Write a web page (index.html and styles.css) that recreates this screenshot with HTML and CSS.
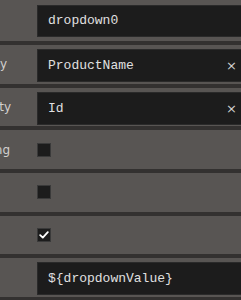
FILE: index.html
```html
<!DOCTYPE html>
<html>
<head>
<meta charset="utf-8">
<link rel="stylesheet" href="styles.css">
</head>
<body>
<div class="panel">
  <div class="row">
    <div class="label"></div>
    <div class="field field-first"><span class="value">dropdown0</span></div>
  </div>
  <div class="row">
    <div class="label label-a"><span>DisplayProperty</span></div>
    <div class="field"><span class="value">ProductName</span><span class="clear">×</span></div>
  </div>
  <div class="row">
    <div class="label label-b"><span>ValueProperty</span></div>
    <div class="field"><span class="value">Id</span><span class="clear">×</span></div>
  </div>
  <div class="row">
    <div class="label label-c"><span>AllowFiltering</span></div>
    <div class="check"></div>
  </div>
  <div class="row">
    <div class="label"></div>
    <div class="check"></div>
  </div>
  <div class="row">
    <div class="label"></div>
    <div class="check checked">
      <svg width="10" height="8" viewBox="0 0 10 8"><path d="M1.2 4.2 L3.8 6.6 L8.8 1.2" fill="none" stroke="#ffffff" stroke-width="1.8" stroke-linecap="round" stroke-linejoin="round"/></svg>
    </div>
  </div>
  <div class="row">
    <div class="label"></div>
    <div class="field"><span class="value">${dropdownValue}</span></div>
  </div>
</div>
</body>
</html>
```

FILE: styles.css
```css
html, body {
  margin: 0;
  padding: 0;
  background: #585553;
  overflow: hidden;
}
.panel {
  display: flex;
  flex-direction: column;
  width: 241px;
  overflow: hidden;
  margin-top: 2.3px;
}
.row {
  display: flex;
  align-items: center;
  height: 38.7px;
  border-bottom: 4px solid #333130;
  flex-shrink: 0;
}
.label {
  width: 37px;
  flex-shrink: 0;
  display: flex;
  justify-content: flex-end;
  overflow: hidden;
  white-space: nowrap;
  font-family: "DejaVu Sans", Verdana, sans-serif;
  font-size: 12px;
  color: #d2d0ce;
}
.label-a { padding-right: 30px; box-sizing: border-box; }
.label-b { padding-right: 26px; box-sizing: border-box; }
.label-c { padding-right: 27px; box-sizing: border-box; }
.field {
  flex: 1;
  align-self: flex-start;
  margin-right: -20px;
  height: 33px;
  margin-top: 4px;
  box-sizing: border-box;
  background: #1c1c1c;
  border: 1px solid #2a2a2a;
  display: flex;
  align-items: center;
  padding: 0 26px 0 10px;
  font-family: "Liberation Mono", "Courier New", monospace;
  font-size: 13px;
  color: #e0e0e0;
}
.field-first {
  margin-top: 2.7px;
  height: 32px;
}
.value {
  flex: 1;
  white-space: nowrap;
}
.clear {
  font-family: "DejaVu Sans", Verdana, sans-serif;
  font-size: 13px;
  color: #d0d0d0;
  margin-right: -3px;
}
.check {
  width: 14px;
  height: 14px;
  box-sizing: border-box;
  background: #1c1c1c;
  border: 1px solid #3a3a3a;
  display: flex;
  align-items: center;
  justify-content: center;
}
```
